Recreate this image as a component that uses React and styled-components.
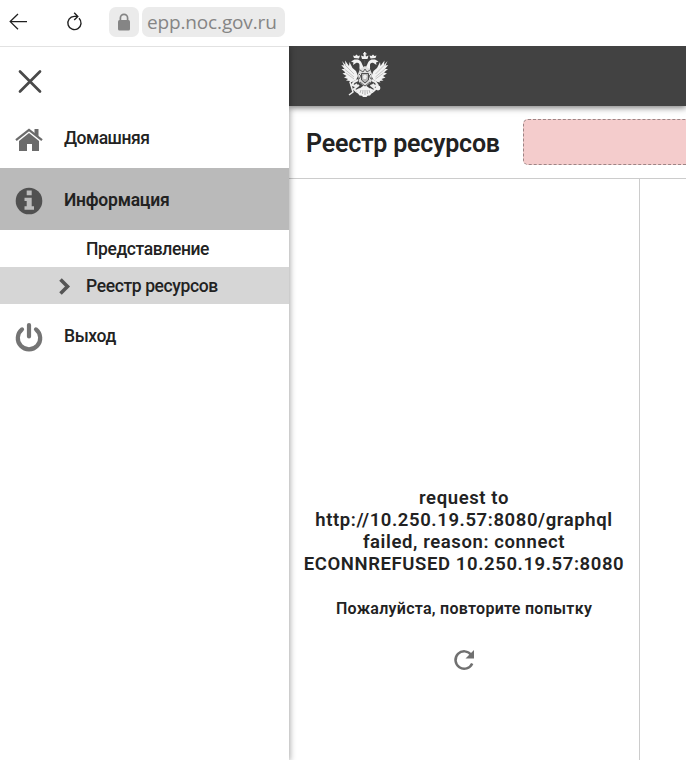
import React, {Fragment} from 'react';
import styled, {createGlobalStyle} from 'styled-components';

export default function App() {
    return (
        <Fragment>
            <GlobalStyle />
            <PageWrapper>
                <BrowserBar>
                    <BarIcon $left={9}><BackIcon /></BarIcon>
                    <BarIcon $left={38}><ReloadIcon /></BarIcon>
                    <LockBox><LockIcon /></LockBox>
                    <Address>epp.noc.gov.ru</Address>
                </BrowserBar>

                <Body>
                    <Sidebar>
                        <CloseButton type="button" aria-label="Закрыть"><CloseIcon /></CloseButton>
                        <MenuItem>
                            <HomeIcon />
                            <Label $spacing="-0.5px">Домашняя</Label>
                        </MenuItem>
                        <MenuItem $active>
                            <InfoIcon />
                            <Label $spacing="-0.22px" $bold>Информация</Label>
                        </MenuItem>
                        <SubItem><Label $spacing="-0.4px">Представление</Label></SubItem>
                        <SubItem $active>
                            <ArrowIcon />
                            <Label $spacing="-0.38px">Реестр ресурсов</Label>
                        </SubItem>
                        <MenuItem>
                            <PowerIcon />
                            <Label $spacing="-0.4px">Выход</Label>
                        </MenuItem>
                    </Sidebar>

                    <Main>
                        <Header><EagleLogo /></Header>
                        <TitleBar>
                            <Title>Реестр ресурсов</Title>
                            <Notice />
                        </TitleBar>
                        <Columns>
                            <ErrorPanel>
                                <ErrorText>
                                    request to<br />
                                    http://10.250.19.57:8080/graphql<br />
                                    failed, reason: connect<br />
                                    ECONNREFUSED 10.250.19.57:8080
                                </ErrorText>
                                <Retry>Пожалуйста, повторите попытку</Retry>
                                <RetryIcon />
                            </ErrorPanel>
                            <EmptyPanel />
                        </Columns>
                    </Main>
                </Body>
            </PageWrapper>
        </Fragment>
    );
}

function BackIcon() {
    return (
        <svg width="18" height="18" viewBox="0 0 18 18" fill="none" stroke="#202020" strokeWidth="1.3">
            <path d="M18 8.6H1.5M9 1L1.2 8.6L9 16.2" />
        </svg>
    );
}

function ReloadIcon() {
    return (
        <svg width="18" height="20" viewBox="0 0 18 20" fill="none" stroke="#202020" strokeWidth="1.4">
            <path d="M14 6.2A6.6 6.6 0 1 1 9.2 4.4H12.6M9.2 0.8L12.8 4.4L9.2 8" />
        </svg>
    );
}

function LockIcon() {
    return (
        <svg width="14" height="18" viewBox="0 0 14 18">
            <path d="M3.4 8V5A3.6 3.6 0 0 1 10.6 5V8" fill="none" stroke="#858585" strokeWidth="1.7" />
            <rect x="1" y="7" width="12" height="10.5" rx="1.5" fill="#858585" />
        </svg>
    );
}

function CloseIcon() {
    return (
        <svg width="26" height="26" viewBox="0 0 26 26" stroke="#494949" strokeWidth="2.7" strokeLinecap="round">
            <path d="M3 2.5L23 22.5M23 2.5L3 22.5" />
        </svg>
    );
}

function HomeIcon() {
    return (
        <svg width="28" height="24" viewBox="0 -1 28 24" fill="#6c6c6c">
            <path d="M1 12.2L14 1.9L27 12.2" fill="none" stroke="#6c6c6c" strokeWidth="2.3" />
            <path d="M19.5 1H23.5V9.5L19.5 6.3Z" />
            <path d="M4 13L14 5L24 13V23H17V16H12V23H4Z" />
        </svg>
    );
}

function InfoIcon() {
    return (
        <svg width="28" height="28" viewBox="0 0 28 28">
            <circle cx="14" cy="14" r="13.3" fill="#515151" />
            <path d="M11.7 3.5H16.7V8.2H11.7ZM9.5 10.8H16.7V19.3H19V22.7H9.5V19.3H11.7V14H9.5Z" fill="#bdbdbd" />
        </svg>
    );
}

function ArrowIcon() {
    return (
        <svg width="14" height="18" viewBox="0 0 14 18" fill="none" stroke="#555" strokeWidth="3.6">
            <path d="M2.5 2.5L9.5 9.5L2.5 16.5" />
        </svg>
    );
}

function PowerIcon() {
    return (
        <svg width="28" height="30" viewBox="0 0 28 30" fill="none" stroke="#747474" strokeWidth="4.2" strokeLinecap="round">
            <path d="M7 7.4A11.2 11.2 0 1 0 21 7.4M14 3V14.5" />
        </svg>
    );
}

function RetryIcon() {
    return (
        <svg width="22" height="22" viewBox="0 0 22 22">
            <path d="M18.3 6A8.7 8.7 0 1 0 19.2 14.5" fill="none" stroke="#707070" strokeWidth="2.5" />
            <path d="M21 1V9.5H12.5Z" fill="#707070" />
        </svg>
    );
}

// double-headed eagle, the right half is the mirrored left one
function EagleLogo() {
    const half = (
        <Fragment>
            {/* wing */}
            <path d="M1 10L4.5 14L4 9.5L8 15L8.5 11L11.5 17L15 20L17 25L15 29L11 31L8 31.5L9 30L5 29.5L7 28L3 26.5L5.5 25L1.5 22.5L4.5 21.5L0.5 18L3.5 18L0.3 14L3 14.5Z" />
            <path d="M4 14L13 23M3.5 18L13 26M5 22L13 28" fill="none" stroke="#a5a5a5" strokeWidth=".6" />
            {/* neck, head and crown */}
            <path d="M22 24C20 21 18 19 18.5 15C18.8 12 17 11.5 15 12L12 14L12.5 11.5L10 10.5L13.5 8.5L17 8.5C21 10 21 14 23 17Z" />
            <path d="M13 7L12 4.5L14 5L15.5 3.5L17 5L19 4.5L18 7.5Z" />
            {/* leg */}
            <path d="M17 29L13 31L11 34L14 35L16 33M18 34L13 38L15 40L19 38" fill="none" stroke="#eee" strokeWidth="2.1" />
            {/* tail */}
            <path d="M22 35L18 38L15 41.5L17 42.5L18.5 44.5L21 44.7L22 46L24 46V35Z" />
        </Fragment>
    );
    return (
        <svg width="48" height="48" viewBox="0 0 48 48" fill="#f2f2f2">
            {half}
            <g transform="translate(47.5 0) scale(-1 1)">{half}</g>
            <path d="M21 8L20 4.5L22.5 5.5L23 3.5H22V2.3H23V1H24.5V2.3H25.5V3.5H24.5L25 5.5L27.5 4.5L26.5 8Z" />
            <path d="M19 18L24 15L29 18L31 23L30 31L24 36L18 31L17 23Z" fill="#dedede" />
            <path d="M23.7 9V14M19 19L22 21L24 18L26 21L29 19M18 23L20 25L18 28M30 23L28 25L30 28M19 31L24 35L29 31" fill="none" stroke="#555" strokeWidth=".9" />
            <path d="M20 39L19 42M22 39L21.5 43M24 39V44M26 39L26.5 43M28 39L29 42" fill="none" stroke="#999" strokeWidth=".7" />
            <path d="M20.5 22.5H27.5V29L24 32L20.5 29Z" fill="#b5b5b5" stroke="#505050" strokeWidth="1" />
            <path d="M22 25L24 23.5L26 25L25 28H22.5Z" fill="#f0f0f0" />
            {/* scepter and orb */}
            <path d="M9 31L12 41L8 44" fill="none" stroke="#eee" strokeWidth="1.5" />
            <circle cx="37" cy="37" r="2.4" />
        </svg>
    );
}

const GlobalStyle = createGlobalStyle`
*{
    box-sizing: border-box;
}
body{
    margin: 0;
    background: #fff;
    color: #222;
    font-family: Roboto, "Liberation Sans", sans-serif;
    overflow: hidden;
}
svg{
    display: block;
    flex: none;
}
`;

const PageWrapper = styled.div`
height: 760px;
display: flex;
flex-direction: column;
overflow: hidden;
`;

const BrowserBar = styled.div`
height: 46px;
flex: none;
display: flex;
align-items: center;
padding-bottom: 3px;
`;

const BarIcon = styled.div`
margin-left: ${props => props.$left}px;
`;

const LockBox = styled.div`
width: 30px;
height: 30px;
margin-left: 26px;
display: flex;
align-items: center;
justify-content: center;
background: #ebebeb;
border-radius: 7px;
`;

const Address = styled.div`
width: 143px;
height: 30px;
margin-left: 3px;
padding-left: 5px;
background: #ebebeb;
border-radius: 7px;
color: #858585;
font: 19px/31px "Open Sans", "Noto Sans", sans-serif;
letter-spacing: -0.15px;
white-space: nowrap;
`;

const Body = styled.div`
flex: 1;
display: flex;
min-height: 0;
`;

const Sidebar = styled.nav`
width: 289px;
flex: none;
position: relative;
z-index: 2;
background: #fff;
border-top: 1px solid #e2e2e2;
box-shadow: 1px 1px 6px rgba(0,0,0,0.35);
clip-path: inset(0 -12px 0 0);
`;

const CloseButton = styled.button`
height: 60px;
display: flex;
align-items: center;
padding: 9px 17px 0;
border: 0;
background: none;
`;

const MenuItem = styled.div`
height: ${props => props.$active ? 62 : 61}px;
display: flex;
align-items: center;
gap: 21px;
padding: 3px 0 0 15px;
background: ${props => props.$active ? '#bababa' : '#fff'};
span{
    margin-top: -2px;
}
&:last-child{
    height: 62px;
}
`;

const SubItem = styled.div`
height: 37px;
display: flex;
align-items: center;
justify-content: flex-end;
gap: 14px;
padding-right: 71px;
background: ${props => props.$active ? '#d6d6d6' : '#fff'};
span{
    width: 132px;
}
`;

const Label = styled.span`
font-size: 17.5px;
font-weight: ${props => props.$bold ? 600 : 500};
line-height: 24px;
letter-spacing: ${props => props.$spacing};
white-space: nowrap;
`;

const Main = styled.main`
flex: 1;
min-width: 0;
display: flex;
flex-direction: column;
`;

const Header = styled.header`
height: 60px;
flex: none;
position: relative;
padding: 5px 0 0 52px;
background: #424242;
box-shadow: 0 2px 6px rgba(0,0,0,0.5);
clip-path: inset(0 0 -12px 0);
`;

const TitleBar = styled.div`
height: 73px;
flex: none;
display: flex;
align-items: center;
padding: 0 0 1px 17px;
border-bottom: 1px solid #ccc;
`;

const Title = styled.h1`
width: 217px;
flex: none;
margin: 4px 0 0;
font-size: 25px;
font-weight: 600;
line-height: 32px;
letter-spacing: -0.22px;
white-space: nowrap;
`;

const Notice = styled.div`
height: 46px;
flex: 1;
background: #f4cccc;
border: 1px dashed #9c8585;
border-right: 0;
border-radius: 5px 0 0 5px;
`;

const Columns = styled.div`
flex: 1;
display: flex;
`;

const ErrorPanel = styled.section`
width: 351px;
display: flex;
flex-direction: column;
align-items: center;
padding-top: 308px;
border-right: 1px solid #ccc;
`;

const EmptyPanel = styled.section`
flex: 1;
`;

const ErrorText = styled.div`
font-size: 18.5px;
font-weight: 600;
line-height: 22px;
letter-spacing: 0.6px;
text-align: center;
white-space: nowrap;
`;

const Retry = styled.div`
margin: 24px 0 30px;
font-size: 16px;
font-weight: 600;
line-height: 20px;
letter-spacing: 0.27px;
white-space: nowrap;
`;
